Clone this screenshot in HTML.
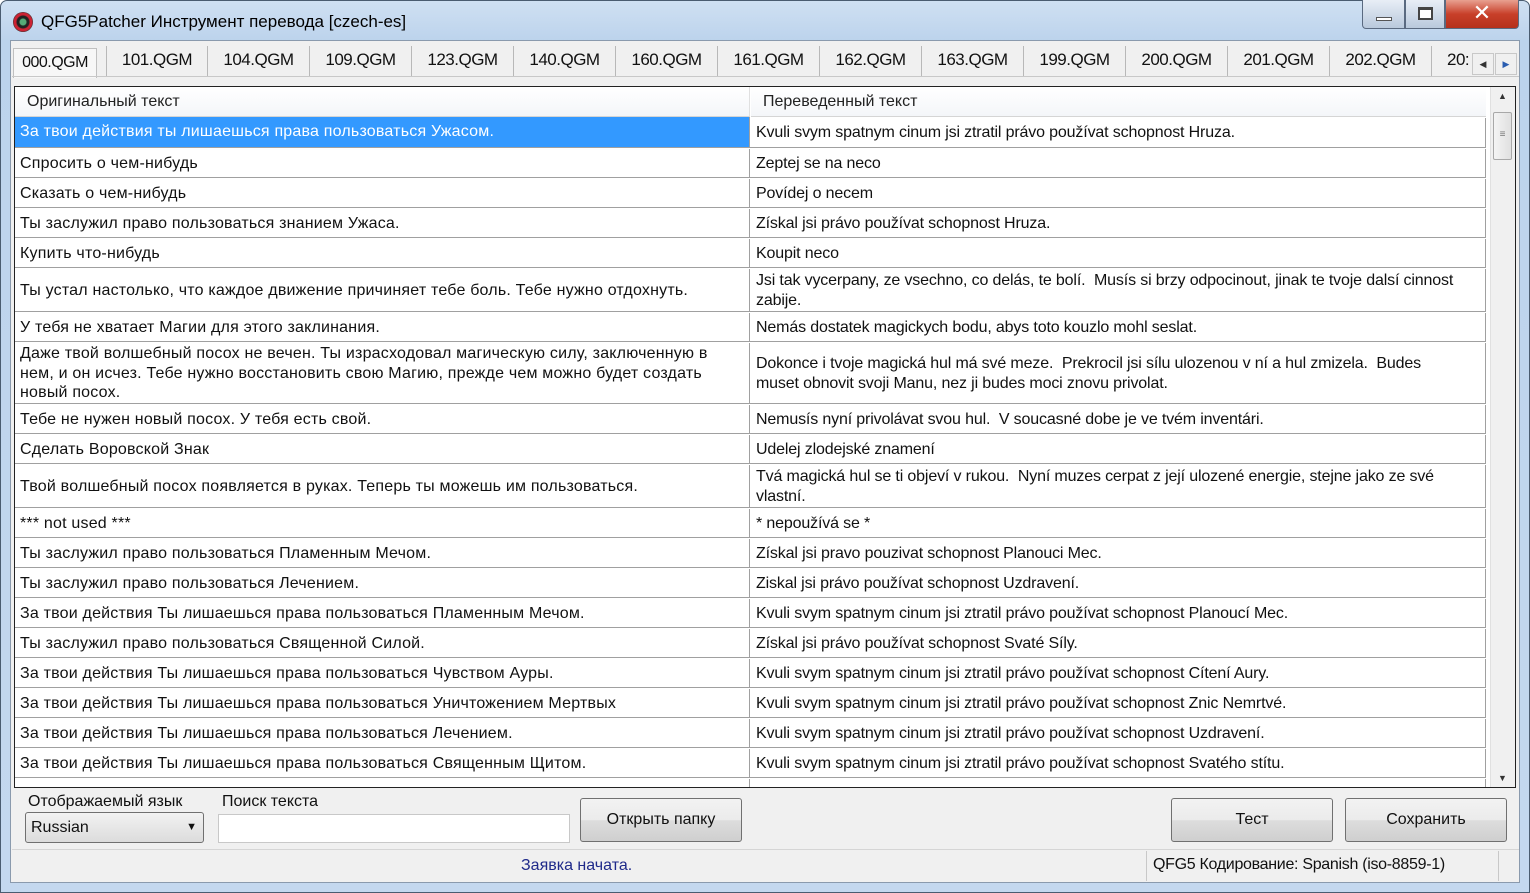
<!DOCTYPE html>
<html><head><meta charset="utf-8">
<style>
*{margin:0;padding:0;box-sizing:border-box}
body{width:1530px;height:893px;overflow:hidden;background:#fff;font-family:"Liberation Sans","DejaVu Sans",sans-serif;position:relative}
.frame{position:absolute;left:0;top:0;width:1530px;height:893px;background:linear-gradient(180deg,#cfe0f2 0,#bcd3ec 40px,#c4d8ef 100%);border:1px solid #4a5c70;border-radius:7px 7px 0 0}
.title{position:absolute;left:41px;top:12px;font-size:17px;color:#000}
.icon{position:absolute;left:13px;top:12px;width:20px;height:20px;border-radius:50%;background:radial-gradient(circle at 50% 50%,#5a7 0 3px,#222 4px 6px,#c23 7px 9px,#333 10px)}
.wb{position:absolute;top:0;height:29px;border:1px solid #5a6a80;border-top:none}
.client{position:absolute;left:10px;top:40px;width:1510px;height:843px;background:#f0f0f0;border:1px solid #8a9aad}
.tab{position:absolute;top:5px;height:30px;font-size:17px;color:#111;text-align:center;line-height:28px;border-right:1px solid #b8b8b8;letter-spacing:-0.5px}
.grid{position:absolute;left:3px;top:45px;width:1502px;height:702px;border:1px solid #222;background:#fff;overflow:hidden}
.hdr{position:absolute;top:0;height:30px;font-size:16px;line-height:30px;padding-left:12px;background:linear-gradient(#fff,#f4f6f9);border-bottom:1px solid #d5d5d5;color:#222}
.r{position:absolute;left:0;width:1471px;border-bottom:1px solid #a0a0a0;font-size:16px;color:#111}
.c1,.c2{position:absolute;top:1px;height:100%;display:flex;align-items:center;line-height:19.5px;letter-spacing:0.2px;white-space:nowrap;overflow:hidden}
.c1{left:0;width:735px;padding-left:5px;border-right:1px solid #a0a0a0}
.c2{left:736px;width:735px;padding-left:5px;border-right:1px solid #a0a0a0;letter-spacing:-0.15px}
.sel .c1{background:#3399ff;color:#fff;top:0}
.sb{position:absolute;right:0;top:0;width:25px;height:700px;background:#f0f0f0;border-left:1px solid #e0e0e0}
.btn{position:absolute;top:757px;height:44px;border:1px solid #707070;border-radius:3px;background:linear-gradient(#f2f2f2 0,#ebebeb 50%,#dddddd 51%,#cfcfcf 100%);font-size:16px;text-align:center;line-height:42px;color:#111}
.lbl{position:absolute;top:752px;font-size:16px;color:#111}
</style></head><body>
<div class="frame"></div>
<div class="icon"></div>
<div class="title">QFG5Patcher Инструмент перевода [czech-es]</div>
<div class="wb" style="left:1362px;width:43px;border-radius:0 0 0 4px;background:linear-gradient(#e8eef6,#b9c9dc)"><div style="position:absolute;left:13px;top:17px;width:16px;height:4px;background:#fff;border:1px solid #555"></div></div>
<div class="wb" style="left:1405px;width:40px;background:linear-gradient(#e8eef6,#b9c9dc)"><div style="position:absolute;left:12px;top:7px;width:15px;height:13px;border:2px solid #444;border-top-width:3px;background:#fff"></div></div>
<div class="wb" style="left:1445px;width:74px;border-radius:0 0 4px 0;background:linear-gradient(#e8a090,#c8402a 50%,#b5301c);color:#fff;font-size:22px;text-align:center;line-height:26px;font-weight:bold">✕</div>
<div class="client">
<div class="tab" style="left:2px;width:84px;background:#f7f7f7;top:7px;border:1px solid #c0c0c0;border-bottom:none;font-size:16px">000.QGM</div>
<div class="tab" style="left:95px;width:102px;border-left:1px solid #b8b8b8">101.QGM</div>
<div class="tab" style="left:197px;width:102px">104.QGM</div>
<div class="tab" style="left:299px;width:102px">109.QGM</div>
<div class="tab" style="left:401px;width:102px">123.QGM</div>
<div class="tab" style="left:503px;width:102px">140.QGM</div>
<div class="tab" style="left:605px;width:102px">160.QGM</div>
<div class="tab" style="left:707px;width:102px">161.QGM</div>
<div class="tab" style="left:809px;width:102px">162.QGM</div>
<div class="tab" style="left:911px;width:102px">163.QGM</div>
<div class="tab" style="left:1013px;width:102px">199.QGM</div>
<div class="tab" style="left:1115px;width:102px">200.QGM</div>
<div class="tab" style="left:1217px;width:102px">201.QGM</div>
<div class="tab" style="left:1319px;width:102px">202.QGM</div>
<div class="tab" style="left:1421px;width:60px;text-align:left;padding-left:15px;border:none">20:</div>
<div style="position:absolute;left:1461px;top:12px;width:22px;height:22px;border:1px solid #c8c8c8;background:#f0f0f0;font-size:9px;text-align:center;line-height:20px;color:#333">◀</div>
<div style="position:absolute;left:1484px;top:12px;width:22px;height:22px;border:1px solid #c8c8c8;background:#f0f0f0;font-size:9px;text-align:center;line-height:20px;color:#2a5db0">▶</div>
<div style="position:absolute;left:1px;top:35px;width:1507px;height:1px;background:#c8c8c8"></div>
<div class="grid">
<div class="hdr" style="left:0;width:735px;border-right:1px solid #e0e0e0">Оригинальный текст</div>
<div class="hdr" style="left:736px;width:735px">Переведенный текст</div>
<div class="r sel" style="top:30px;height:31px"><div class="c1">За твои действия ты лишаешься права пользоваться Ужасом.</div><div class="c2">Kvuli svym spatnym cinum jsi ztratil právo používat schopnost Hruza.</div></div>
<div class="r" style="top:61px;height:30px"><div class="c1">Спросить о чем-нибудь</div><div class="c2">Zeptej se na neco</div></div>
<div class="r" style="top:91px;height:30px"><div class="c1">Сказать о чем-нибудь</div><div class="c2">Povídej o necem</div></div>
<div class="r" style="top:121px;height:30px"><div class="c1">Ты заслужил право пользоваться знанием Ужаса.</div><div class="c2">Získal jsi právo používat schopnost Hruza.</div></div>
<div class="r" style="top:151px;height:30px"><div class="c1">Купить что-нибудь</div><div class="c2">Koupit neco</div></div>
<div class="r" style="top:181px;height:44px"><div class="c1">Ты устал настолько, что каждое движение причиняет тебе боль. Тебе нужно отдохнуть.</div><div class="c2"><div>Jsi tak vycerpany, ze vsechno, co delás, te bolí.&nbsp; Musís si brzy odpocinout, jinak te tvoje dalsí cinnost<br>zabije.</div></div></div>
<div class="r" style="top:225px;height:30px"><div class="c1">У тебя не хватает Магии для этого заклинания.</div><div class="c2">Nemás dostatek magickych bodu, abys toto kouzlo mohl seslat.</div></div>
<div class="r" style="top:255px;height:62px"><div class="c1"><div>Даже твой волшебный посох не вечен. Ты израсходовал магическую силу, заключенную в<br>нем, и он исчез. Тебе нужно восстановить свою Магию, прежде чем можно будет создать<br>новый посох.</div></div><div class="c2"><div>Dokonce i tvoje magická hul má své meze.&nbsp; Prekrocil jsi sílu ulozenou v ní a hul zmizela.&nbsp; Budes<br>muset obnovit svoji Manu, nez ji budes moci znovu privolat.</div></div></div>
<div class="r" style="top:317px;height:30px"><div class="c1">Тебе не нужен новый посох. У тебя есть свой.</div><div class="c2">Nemusís nyní privolávat svou hul.&nbsp; V soucasné dobe je ve tvém inventári.</div></div>
<div class="r" style="top:347px;height:30px"><div class="c1">Сделать Воровской Знак</div><div class="c2">Udelej zlodejské znamení</div></div>
<div class="r" style="top:377px;height:44px"><div class="c1">Твой волшебный посох появляется в руках. Теперь ты можешь им пользоваться.</div><div class="c2"><div>Tvá magická hul se ti objeví v rukou.&nbsp; Nyní muzes cerpat z její ulozené energie, stejne jako ze své<br>vlastní.</div></div></div>
<div class="r" style="top:421px;height:30px"><div class="c1">*** not used ***</div><div class="c2">* nepoužívá se *</div></div>
<div class="r" style="top:451px;height:30px"><div class="c1">Ты заслужил право пользоваться Пламенным Мечом.</div><div class="c2">Získal jsi pravo pouzivat schopnost Planouci Mec.</div></div>
<div class="r" style="top:481px;height:30px"><div class="c1">Ты заслужил право пользоваться Лечением.</div><div class="c2">Ziskal jsi právo používat schopnost Uzdravení.</div></div>
<div class="r" style="top:511px;height:30px"><div class="c1">За твои действия Ты лишаешься права пользоваться Пламенным Мечом.</div><div class="c2">Kvuli svym spatnym cinum jsi ztratil právo používat schopnost Planoucí Mec.</div></div>
<div class="r" style="top:541px;height:30px"><div class="c1">Ты заслужил право пользоваться Священной Силой.</div><div class="c2">Získal jsi právo používat schopnost Svaté Síly.</div></div>
<div class="r" style="top:571px;height:30px"><div class="c1">За твои действия Ты лишаешься права пользоваться Чувством Ауры.</div><div class="c2">Kvuli svym spatnym cinum jsi ztratil právo používat schopnost Cítení Aury.</div></div>
<div class="r" style="top:601px;height:30px"><div class="c1">За твои действия Ты лишаешься права пользоваться Уничтожением Мертвых</div><div class="c2">Kvuli svym spatnym cinum jsi ztratil právo používat schopnost Znic Nemrtvé.</div></div>
<div class="r" style="top:631px;height:30px"><div class="c1">За твои действия Ты лишаешься права пользоваться Лечением.</div><div class="c2">Kvuli svym spatnym cinum jsi ztratil právo používat schopnost Uzdravení.</div></div>
<div class="r" style="top:661px;height:30px"><div class="c1">За твои действия Ты лишаешься права пользоваться Священным Щитом.</div><div class="c2">Kvuli svym spatnym cinum jsi ztratil právo používat schopnost Svatého stítu.</div></div>
<div class="r" style="top:691px;height:30px;border:none"><div class="c1"></div><div class="c2"></div></div>
<div class="sb">
<div style="position:absolute;top:4px;left:7px;font-size:9px;color:#333">▲</div>
<div style="position:absolute;top:25px;left:2px;width:19px;height:48px;border:1px solid #a8a8a8;border-radius:2px;background:linear-gradient(90deg,#f4f4f4,#e0e0e0);font-size:10px;text-align:center;line-height:44px;color:#777">≡</div>
<div style="position:absolute;bottom:4px;left:7px;font-size:9px;color:#333">▼</div>
</div>
</div>
<div class="lbl" style="left:17px">Отображаемый язык</div>
<div class="lbl" style="left:211px">Поиск текста</div>
<div style="position:absolute;left:14px;top:771px;width:179px;height:31px;border:1px solid #707070;border-radius:3px;background:linear-gradient(#f2f2f2,#dcdcdc);font-size:16px;line-height:29px;padding-left:5px;color:#111">Russian<span style="position:absolute;right:6px;top:0;font-size:11px">▼</span></div>
<div style="position:absolute;left:207px;top:773px;width:352px;height:29px;border:1px solid #c8c8c8;background:#fff"></div>
<div class="btn" style="left:569px;width:162px">Открыть папку</div>
<div class="btn" style="left:1160px;width:162px">Тест</div>
<div class="btn" style="left:1334px;width:162px">Сохранить</div>
<div style="position:absolute;left:1px;top:808px;width:1507px;height:33px;background:#f0f0f0;border-top:1px solid #d5d5d5"></div>
<div style="position:absolute;left:510px;top:816px;font-size:16px;color:#1f2a8a">Заявка начата.</div>
<div style="position:absolute;left:1135px;top:810px;width:1px;height:30px;background:#c8c8c8"></div>
<div style="position:absolute;left:1142px;top:815px;font-size:16px;color:#111;letter-spacing:-0.3px">QFG5 Кодирование: Spanish (iso-8859-1)</div>
<div style="position:absolute;left:1487px;top:810px;width:1px;height:30px;background:#c8c8c8"></div>
</div>
</body></html>
